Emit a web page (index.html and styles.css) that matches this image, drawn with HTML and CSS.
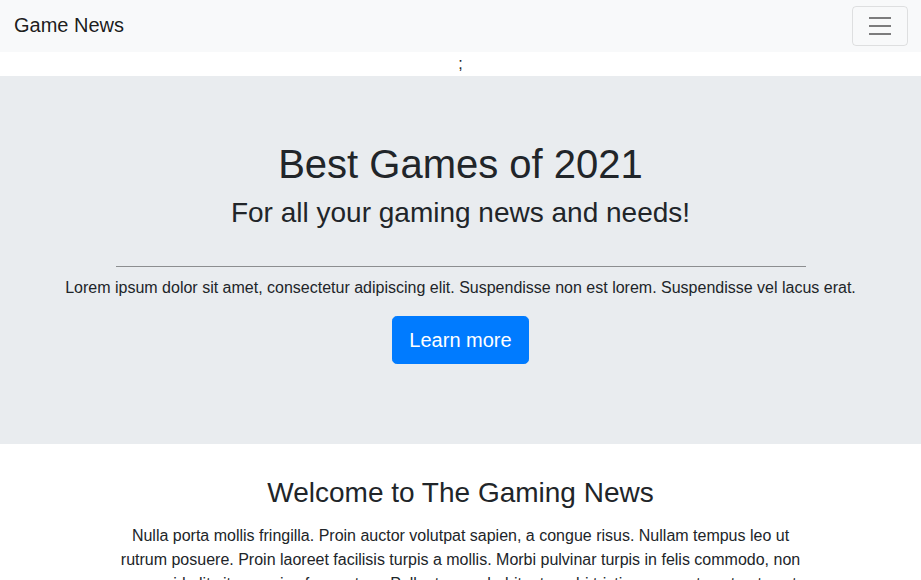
FILE: index.html
```html
<!DOCTYPE html>
<html lang="en">
<head>
<meta charset="utf-8">
<title>Game News</title>
<link rel="stylesheet" href="styles.css">
</head>
<body>
<nav class="navbar">
  <a class="brand" href="#">Game News</a>
  <button class="toggler" type="button" aria-label="Toggle navigation">
    <svg class="toggler-icon" width="30" height="30" viewBox="0 0 30 30" aria-hidden="true">
      <path d="M4 7h22M4 15h22M4 23h22" stroke="rgba(0,0,0,0.5)" stroke-width="2" stroke-miterlimit="10" fill="none"/>
    </svg>
  </button>
</nav>
<div class="stray">;</div>
<section class="jumbotron">
  <h1 class="title">Best Games of 2021</h1>
  <h3 class="subtitle">For all your gaming news and needs!</h3>
  <div class="container">
    <hr class="rule">
  </div>
  <p class="lead-text">Lorem ipsum dolor sit amet, consectetur adipiscing elit. Suspendisse non est lorem. Suspendisse vel lacus erat.</p>
  <p class="cta"><a class="btn" href="#">Learn more</a></p>
</section>
<section class="container welcome">
  <h3 class="welcome-title">Welcome to The Gaming News</h3>
  <p class="welcome-text">Nulla porta mollis fringilla. Proin auctor volutpat sapien, a congue risus. Nullam tempus leo ut rutrum posuere. Proin laoreet facilisis turpis a mollis. Morbi pulvinar turpis in felis commodo, non neque id elit vitae, varius fermentum. Pellentesque habitant morbi tristique senectus et netus et malesuada fames ac turpis egestas.</p>
</section>
</body>
</html>
```
FILE: styles.css
```css
* { box-sizing: border-box; }
html, body { margin: 0; padding: 0; }
body {
  font-family: "Liberation Sans", Arial, sans-serif;
  font-size: 16px;
  line-height: 1.5;
  color: #212529;
  background: #fff;
}
.navbar {
  display: flex;
  align-items: center;
  justify-content: space-between;
  height: 52px;
  padding: 0 13px 0 14px;
  background: #f8f9fa;
}
.brand {
  font-size: 20px;
  line-height: 30px;
  color: rgba(0,0,0,0.9);
  text-decoration: none;
  padding-bottom: 3px;
}
.toggler {
  display: flex;
  align-items: center;
  justify-content: center;
  width: 56px;
  height: 40px;
  padding: 4px 12px;
  background: transparent;
  border: 1px solid rgba(0,0,0,0.1);
  border-radius: 4px;
}
.toggler-icon { display: block; }
.stray {
  height: 24px;
  text-align: center;
  line-height: 24px;
}
.jumbotron {
  background: #e9ecef;
  padding: 64px 32px;
  margin-bottom: 32px;
  text-align: center;
}
.title {
  font-size: 40px;
  font-weight: 400;
  line-height: 1.2;
  margin: 0 0 8px;
}
.subtitle {
  font-size: 28px;
  font-weight: 400;
  line-height: 1.2;
  margin: 0;
}
.container {
  width: 720px;
  max-width: 100%;
  margin: 0 auto;
  padding: 0 15px;
}
.rule {
  border: 0;
  border-top: 1px solid #8c8e90;
  margin: 36px 0 9px;
}
.lead-text { margin: 0 0 16px; }
.cta { margin: 0 0 16px; }
.btn {
  display: inline-block;
  background: #007bff;
  color: #fff;
  border: 1px solid #007bff;
  border-radius: 4.8px;
  font-size: 20px;
  line-height: 30px;
  padding: 8px 16px;
  text-decoration: none;
}
.welcome { text-align: center; }
.welcome-title {
  font-size: 28px;
  font-weight: 400;
  line-height: 1.2;
  margin: 0 0 15px;
}
.welcome-text { margin: 0 0 16px; }
```
